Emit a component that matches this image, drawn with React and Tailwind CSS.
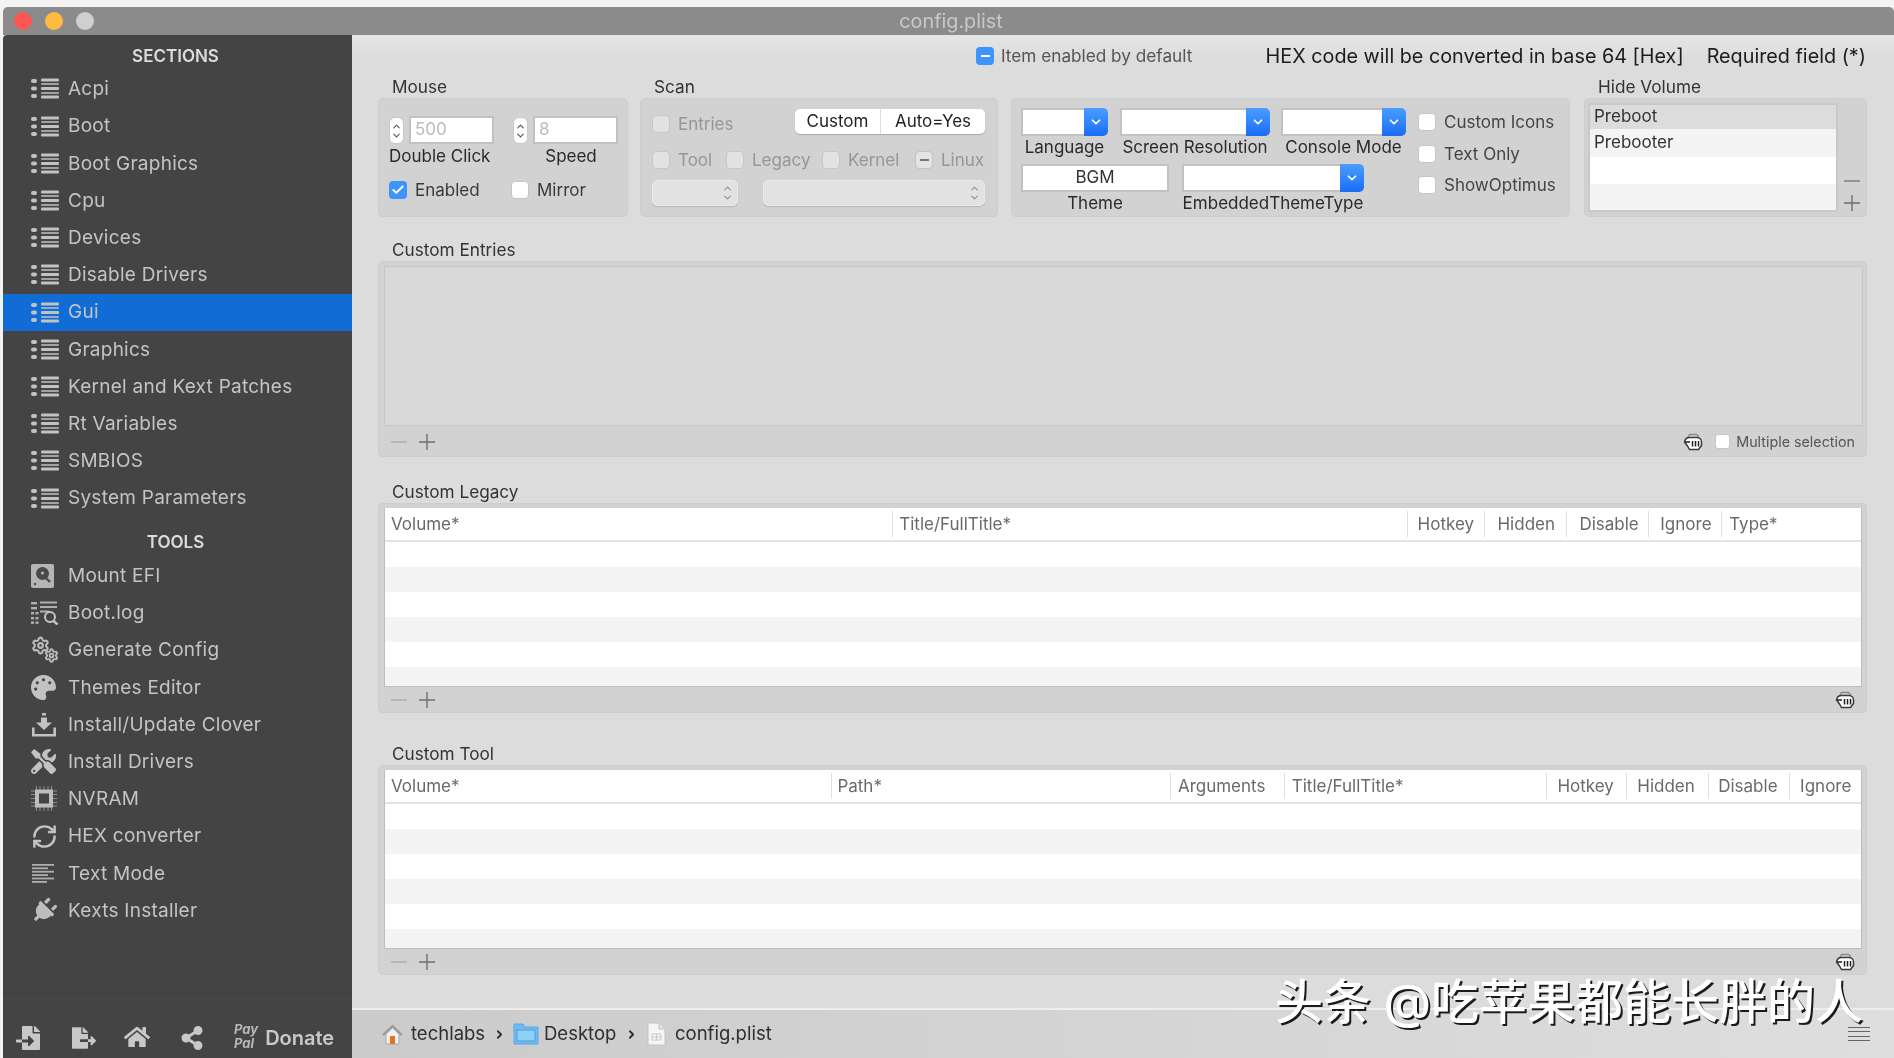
import { Check, ChevronDown, ChevronRight, ChevronUp, RefreshCw, Settings } from "lucide-react";
import { FaFileExport, FaFileImport, FaHome, FaPalette, FaPlug, FaShareAlt, FaTools } from "react-icons/fa";

const SECTIONS = ["Acpi", "Boot", "Boot Graphics", "Cpu", "Devices", "Disable Drivers", "Gui", "Graphics", "Kernel and Kext Patches", "Rt Variables", "SMBIOS", "System Parameters"];

const LEGACY_COLS = [
  { label: "Volume*", w: "w-[508px]", pad: "pl-[6px]" },
  { label: "Title/FullTitle*", w: "w-[515px]", pad: "pl-[6px]" },
  { label: "Hotkey", w: "w-[78px]", pad: "pl-[10px]" },
  { label: "Hidden", w: "w-[82px]", pad: "pl-[12px]" },
  { label: "Disable", w: "w-[82px]", pad: "pl-[12px]" },
  { label: "Ignore", w: "w-[73px]", pad: "pl-[11px]" },
  { label: "Type*", w: "w-[140px]", pad: "pl-[7px]" },
];

const TOOL_COLS = [
  { label: "Volume*", w: "w-[447px]", pad: "pl-[6px]" },
  { label: "Path*", w: "w-[339px]", pad: "pl-[5px]" },
  { label: "Arguments", w: "w-[114px]", pad: "pl-[7px]" },
  { label: "Title/FullTitle*", w: "w-[263px]", pad: "pl-[7px]" },
  { label: "Hotkey", w: "w-[80px]", pad: "pl-[10px]" },
  { label: "Hidden", w: "w-[82px]", pad: "pl-[10px]" },
  { label: "Disable", w: "w-[81px]", pad: "pl-[9px]" },
  { label: "Ignore", w: "w-[72px]", pad: "pl-[10px]" },
];

function ListIcon() {
  return (
    <svg width="28" height="21" viewBox="0 0 28 21" fill="#c2c2c2">
      <rect x="0" y="1" width="6" height="4" rx="2" />
      <rect x="0" y="8.500" width="6" height="4" rx="2" />
      <rect x="0" y="16" width="6" height="4" rx="2" />
      <rect x="10" y="0.500" width="18" height="3" rx="1" />
      <rect x="10" y="5" width="18" height="2" rx="1" opacity="0.75" />
      <rect x="10" y="9" width="18" height="3" rx="1" />
      <rect x="10" y="14" width="18" height="2" rx="1" opacity="0.75" />
      <rect x="10" y="17.500" width="18" height="3" rx="1" />
    </svg>
  );
}

function DiskIcon() {
  return (
    <svg width="23" height="24" viewBox="0 0 23 24">
      <rect width="23" height="24" rx="2" fill="#b5b5b5" />
      <circle cx="11.500" cy="9.500" r="6.500" fill="#4a4a4a" />
      <circle cx="11.500" cy="9" r="1.600" fill="#b5b5b5" />
      <path d="M12 11l7 7" stroke="#4a4a4a" strokeWidth="2.400" />
      <circle cx="4" cy="20" r="1.200" fill="#4a4a4a" />
    </svg>
  );
}

function LogIcon() {
  return (
    <svg width="28" height="24" viewBox="0 0 28 24" fill="none">
      <g fill="#b0b0b0">
        <rect x="0" y="1" width="6" height="2.400" /><rect x="9" y="0.500" width="17" height="2" />
        <rect x="0" y="6" width="6" height="2.400" /><rect x="9" y="5" width="17" height="2" />
        <rect x="0" y="11" width="3" height="2.400" /><rect x="4.500" y="11" width="3" height="2.400" /><rect x="9" y="9.500" width="9" height="2" />
        <rect x="0" y="16" width="3" height="2.400" /><rect x="4.500" y="16" width="3" height="2.400" />
        <rect x="0" y="20.500" width="3" height="2.400" /><rect x="4.500" y="20.500" width="3" height="2.400" />
      </g>
      <circle cx="19" cy="16" r="5" stroke="#c4c4c4" strokeWidth="2" />
      <path d="M22.500 20l4 3.500" stroke="#c4c4c4" strokeWidth="2.400" />
    </svg>
  );
}

function GearsIcon() {
  return (
    <span className="flex items-start h-[27px] -mt-[2px]">
      <Settings size={19} color="#bcbcbc" strokeWidth={2.6} />
      <Settings size={15} color="#bcbcbc" strokeWidth={3} className="-ml-[6px] mt-[12px]" />
    </span>
  );
}

function DownloadIcon() {
  return (
    <svg width="26" height="24" viewBox="0 0 26 24" fill="#c2c2c2">
      <rect x="11" y="0" width="4" height="2.500" />
      <path d="M10 4.500h6v5h5l-8 7.500-8-7.500h5z" />
      <path d="M1 14.500v9h24v-9h-2.600v6.400H3.600v-6.400z" />
    </svg>
  );
}

function ChipIcon() {
  return (
    <svg width="26" height="25" viewBox="0 0 26 25" fill="none">
      <path d="M5.500 0v25M9 0v25M13 0v25M17 0v25M20.500 0v25M0 5h26M0 8.500h26M0 12.500h26M0 16.500h26M0 20h26" stroke="#8f8f8f" strokeWidth="1" />
      <rect x="4" y="3.500" width="18" height="18" fill="#bdbdbd" />
      <rect x="8" y="7.500" width="10" height="10" fill="#444444" />
    </svg>
  );
}

function TextIcon() {
  return (
    <svg width="24" height="19" viewBox="0 0 24 19" fill="#aeaeae">
      <rect x="1" y="0" width="22" height="1.800" />
      <rect x="1" y="3.400" width="16" height="1.800" />
      <rect x="1" y="6.800" width="22" height="1.800" />
      <rect x="1" y="10.200" width="16" height="1.800" />
      <rect x="1" y="13.600" width="22" height="1.800" />
      <rect x="1" y="17" width="15" height="1.800" />
    </svg>
  );
}

const TOOLS = [
  { label: "Mount EFI", icon: <DiskIcon /> },
  { label: "Boot.log", icon: <LogIcon /> },
  { label: "Generate Config", icon: <GearsIcon /> },
  { label: "Themes Editor", icon: <FaPalette size={25} color="#c2c2c2" /> },
  { label: "Install/Update Clover", icon: <DownloadIcon /> },
  { label: "Install Drivers", icon: <FaTools size={25} color="#c2c2c2" /> },
  { label: "NVRAM", icon: <ChipIcon /> },
  { label: "HEX converter", icon: <RefreshCw size={27} color="#c2c2c2" strokeWidth={2.2} /> },
  { label: "Text Mode", icon: <TextIcon /> },
  { label: "Kexts Installer", icon: <FaPlug size={26} color="#bdbdbd" className="rotate-45" /> },
];

function SideRow({ icon, label, active }) {
  return (
    <div className={`h-[37.2px] flex items-center pl-[28px] text-[19px] tracking-[0.25px] text-[#c4c4c4] ${active ? "bg-[#116cd6]" : ""}`}>
      <span className="w-[37px] flex justify-start">{icon}</span>
      <span className="pt-[1px]">{label}</span>
    </div>
  );
}

function Sidebar() {
  return (
    <aside className="w-[349px] shrink-0 flex flex-col bg-[#444444] rounded-tl-[4px]">
      <div className="h-[35.4px] pt-[8px] pr-[4px] flex items-center justify-center text-[17px] font-semibold text-[#dcdcdc]">SECTIONS</div>
      {SECTIONS.map((s) => (
        <SideRow key={s} icon={<ListIcon />} label={s} active={s === "Gui"} />
      ))}
      <div className="h-[40.6px] pt-[12px] pr-[4px] flex items-center justify-center text-[17px] font-semibold text-[#dcdcdc]">TOOLS</div>
      {TOOLS.map((t) => (
        <SideRow key={t.label} icon={t.icon} label={t.label} />
      ))}
      <div className="mt-auto h-[65px] border-t border-[#3d3d3d] flex items-end pb-[8px] pl-[13px] text-[#c8c8c8]">
        <FaFileImport size={24} />
        <FaFileExport size={24} className="ml-[32px]" />
        <FaHome size={26} className="ml-[28px]" />
        <FaShareAlt size={24} className="ml-[30px]" />
        <div className="ml-[30px] flex flex-col text-[13px] leading-[14px] font-bold italic text-[#b8b8b8]">
          <span>Pay</span>
          <span>Pal</span>
        </div>
        <span className="ml-[7px] text-[20px] leading-[24px] font-semibold">Donate</span>
      </div>
    </aside>
  );
}

function Checkbox({ checked, dash, disabled, small }) {
  const size = small ? "w-[15px] h-[15px] rounded-[3px]" : "w-[18px] h-[18px] rounded-[4px]";
  if (checked || dash) {
    const color = disabled ? "bg-[#e4e4e4] border border-[#c4c4c4]" : "bg-[#3d94fb]";
    return (
      <span className={`${size} ${color} shrink-0 flex items-center justify-center`}>
        {checked && <Check size={14} color="#fff" strokeWidth={3.4} />}
        {dash && <span className={`w-[9px] h-[2.5px] ${disabled ? "bg-[#777777]" : "bg-white"}`} />}
      </span>
    );
  }
  const color = disabled ? "bg-[#e2e2e2] border-[#c6c6c6]" : "bg-white border-[#c6c6c6]";
  return <span className={`${size} ${color} border shrink-0 block`} />;
}

function Stepper() {
  return (
    <span className="w-[15px] h-[27px] mt-[1px] rounded-[6px] bg-white border border-[#c8c8c8] flex flex-col items-center justify-center shrink-0 text-[#555555]">
      <ChevronUp size={11} strokeWidth={2.4} className="-mb-[1px]" />
      <ChevronDown size={11} strokeWidth={2.4} className="-mt-[1px]" />
    </span>
  );
}

function NumberInput({ value }) {
  return (
    <div className="flex items-start gap-[5px]">
      <Stepper />
      <span className="w-[85px] h-[28px] bg-white border-2 border-[#c2c2c2] flex items-center pl-[4px] text-[17px] text-[#bcbcbc]">{value}</span>
    </div>
  );
}

function Dropdown({ w }) {
  return (
    <div className={`${w} h-[28px] flex bg-white border-2 border-r-0 border-[#c2c2c2] rounded-r-[5px]`}>
      <span className="flex-1" />
      <span className="w-[24px] -my-[2px] rounded-r-[5px] bg-gradient-to-b from-[#4a9dfc] to-[#1a6cf5] flex items-center justify-center">
        <ChevronDown size={14} color="#fff" strokeWidth={3} />
      </span>
    </div>
  );
}

function SelectBox({ w }) {
  return (
    <div className={`${w} h-[26px] rounded-[5px] bg-[#e2e2e2] border border-[#ebebeb] shadow-[0_1px_1px_#b5b5b5] flex items-center justify-end pr-[4px] text-[#8c8c8c]`}>
      <span className="flex flex-col">
        <ChevronUp size={11} strokeWidth={2.2} className="-mb-[1px]" />
        <ChevronDown size={11} strokeWidth={2.2} className="-mt-[1px]" />
      </span>
    </div>
  );
}

function Minus({ light }) {
  return (
    <svg width="16" height="16" viewBox="0 0 16 16">
      <path d="M0 8h16" stroke={light ? "#adadad" : "#7a7a7a"} strokeWidth="1.4" />
    </svg>
  );
}

function Plus() {
  return (
    <svg width="16" height="16" viewBox="0 0 16 16">
      <path d="M0 8h16M8 0v16" stroke="#6f6f6f" strokeWidth="1.4" />
    </svg>
  );
}

function Hand() {
  return (
    <svg width="20" height="18" viewBox="0 0 20 18" className="block">
      <path d="M5 4l1.500-2.500h7L16 4" fill="none" stroke="#8a8a8a" strokeWidth="1.400" />
      <path d="M1.500 9C2 6 4 4.500 6.500 4.500h7.500c2.500 0 4.500 2 4.500 4.500v3.500l-3 4H6.500l-2-3.500z" fill="#fff" stroke="#3a3a3a" strokeWidth="1.500" />
      <path d="M2 9h5M9.500 8v5.500M12.500 8v5.500M15.500 8v5.500" stroke="#1f1f1f" strokeWidth="1.500" />
    </svg>
  );
}

function Label({ children, h, pl = "pl-[14px]" }) {
  return <div className={`${h} ${pl} flex items-center text-[17.2px] text-[#333333]`}>{children}</div>;
}

function Box({ className, children }) {
  return <div className={`bg-[#d2d2d2] border border-[#cdcdcd] rounded-[5px] ${className}`}>{children}</div>;
}

function MouseBox() {
  return (
    <div className="w-[250px]">
      <Label h="h-[21px] pb-[2px]">Mouse</Label>
      <Box className="h-[119px] pt-[17px] pl-[10px] flex text-[17px] text-[#2a2a2a]">
        <div className="w-[122px]">
          <NumberInput value="500" />
          <div className="h-[25px] flex items-center">Double Click</div>
          <div className="mt-[12px] h-[18px] leading-[18px] flex items-center gap-[8px] text-[#3a3a3a]">
            <Checkbox checked />
            Enabled
          </div>
        </div>
        <div className="w-[116px]">
          <div className="pl-[2px]"><NumberInput value="8" /></div>
          <div className="h-[25px] flex items-center justify-center pl-[4px]">Speed</div>
          <div className="mt-[12px] h-[18px] leading-[18px] flex items-center gap-[8px] text-[#3a3a3a]">
            <Checkbox />
            Mirror
          </div>
        </div>
      </Box>
    </div>
  );
}

function ScanItem({ label, w, dash }) {
  return (
    <div className={`${w} h-[18px] leading-[18px] flex items-center gap-[8px] text-[17px] text-[#969696]`}>
      <Checkbox disabled dash={dash} />
      {label}
    </div>
  );
}

function ScanBox() {
  return (
    <div className="w-[358px] ml-[12px]">
      <Label h="h-[21px] pb-[2px]">Scan</Label>
      <Box className="h-[119px] pt-[10px] pl-[11px] pr-[12px]">
        <div className="flex justify-between items-start h-[25px]">
          <div className="mt-[6px]"><ScanItem label="Entries" w="w-[90px]" /></div>
          <div className="w-[190px] h-[25px] bg-white rounded-[5px] shadow-[0_1px_1px_#a8a8a8] flex items-center text-[17px] text-[#222222]">
            <span className="w-[86px] h-full flex items-center justify-center border-r border-[#dddddd]">Custom</span>
            <span className="flex-1 text-center">Auto=Yes</span>
          </div>
        </div>
        <div className="mt-[17px] flex">
          <ScanItem label="Tool" w="w-[74px]" />
          <ScanItem label="Legacy" w="w-[96px]" />
          <ScanItem label="Kernel" w="w-[93px]" />
          <ScanItem label="Linux" w="w-[70px]" dash />
        </div>
        <div className="mt-[11px] flex gap-[25px]">
          <SelectBox w="w-[87px]" />
          <SelectBox w="w-[223px]" />
        </div>
      </Box>
    </div>
  );
}

function Field({ w, gap, label, children }) {
  return (
    <div className={`${w} flex flex-col`}>
      {children}
      <div className={`${gap} flex items-center justify-center whitespace-nowrap text-[17px] text-[#2a2a2a]`}>{label}</div>
    </div>
  );
}

function CheckLine({ label }) {
  return (
    <div className="h-[18px] leading-[18px] flex items-center gap-[8px]">
      <Checkbox />
      {label}
    </div>
  );
}

function GuiBox() {
  return (
    <div className="w-[559px] ml-[13px]">
      <div className="h-[21px]" />
      <Box className="h-[119px] pt-[9px] pl-[9px] flex">
        <div className="w-[397px]">
          <div className="flex">
            <Field w="w-[87px]" gap="h-[24px]" label="Language"><Dropdown w="w-[87px]" /></Field>
            <div className="w-[12px]" />
            <Field w="w-[150px]" gap="h-[24px]" label="Screen Resolution"><Dropdown w="w-[150px]" /></Field>
            <div className="w-[11px]" />
            <Field w="w-[125px]" gap="h-[24px]" label="Console Mode"><Dropdown w="w-[125px]" /></Field>
          </div>
          <div className="mt-[4px] flex gap-[13px]">
            <Field w="w-[148px]" gap="h-[24px]" label="Theme">
              <span className="h-[28px] bg-white border-2 border-[#c2c2c2] flex items-center justify-center text-[17px] text-[#333333]">BGM</span>
            </Field>
            <Field w="w-[182px]" gap="h-[24px]" label="EmbeddedThemeType"><Dropdown w="w-[182px]" /></Field>
          </div>
        </div>
        <div className="pt-[5px] flex flex-col gap-[13.5px] text-[17px] text-[#444444]">
          <CheckLine label="Custom Icons" />
          <CheckLine label="Text Only" />
          <CheckLine label="ShowOptimus" />
        </div>
      </Box>
    </div>
  );
}

function HideVolumeBox() {
  return (
    <div className="w-[283px] ml-[14px]">
      <Label h="h-[21px] pb-[2px]">Hide Volume</Label>
      <Box className="h-[119px] pt-[4px] pl-[3px] flex">
        <div className="w-[251px] h-[109px] border-2 border-[#c8c8c8] flex flex-col text-[17px] text-[#333333]">
          <div className="h-[24px] bg-[#dcdcdc] pl-[4px] flex items-center">Preboot</div>
          <div className="h-[28px] bg-[#f4f4f4] pl-[4px] flex items-center">Prebooter</div>
          <div className="h-[27px] bg-white" />
          <div className="flex-1 bg-[#f4f4f4]" />
        </div>
        <div className="w-[28px] h-[109px] pb-[1px] flex flex-col items-center justify-end gap-[6px]">
          <Minus />
          <Plus />
        </div>
      </Box>
    </div>
  );
}

function DataTable({ cols }) {
  const rows = [0, 1, 2, 3, 4, 5];
  return (
    <div className="h-[179px] border-x border-b border-[#bdbdbd] overflow-hidden bg-white">
      <div className="h-[34px] flex items-center border-b-2 border-[#e3e3e3] text-[17px] text-[#6a6a6a]">
        {cols.map((c, i) => (
          <div key={c.label} className={`${c.w} ${c.pad} h-[26px] pt-[2px] flex items-center whitespace-nowrap ${i > 0 ? "border-l border-[#e0e0e0]" : ""}`}>
            {c.label}
          </div>
        ))}
      </div>
      {rows.map((r) => (
        <div key={r} className={`h-[25px] ${r % 2 ? "bg-[#f4f4f4]" : "bg-white"}`} />
      ))}
    </div>
  );
}

function TableGroup({ title, cols, labelH }) {
  return (
    <div>
      <Label h={labelH}>{title}</Label>
      <Box className="h-[210px] pt-[4px] pl-[5px] pr-[4px]">
        <DataTable cols={cols} />
        <div className="h-[26px] flex items-center pl-[7px] pr-[7px] gap-[12px]">
          <Minus light />
          <Plus />
          <span className="ml-auto"><Hand /></span>
        </div>
      </Box>
    </div>
  );
}

function BottomBar() {
  return (
    <div className="h-[50px] shrink-0 border-t-2 border-[#eeeeee] bg-gradient-to-r from-[#cbcbcb] to-[#dedede] flex items-center pl-[30px] pr-[24px] text-[18.5px] text-[#2f2f2f]">
      <svg width="21" height="21" viewBox="0 0 21 21">
        <path d="M4 10v10h13V10l-6.500-6z" fill="#f1f1f1" stroke="#a8a8a8" />
        <path d="M1 11l9.500-9 9.500 9" fill="none" stroke="#9a9a9a" strokeWidth="2" />
        <rect x="8" y="12" width="5" height="8" fill="#e8741a" />
      </svg>
      <span className="ml-[8px] w-[74px]">techlabs</span>
      <ChevronRight size={13} strokeWidth={3.4} className="ml-[8px]" />
      <svg className="ml-[7px]" width="26" height="24" viewBox="0 0 26 24">
        <path d="M1 22V2h9l2 3h13v17z" fill="#6cbcf1" stroke="#54a8e2" />
        <rect x="4" y="8" width="18" height="11" fill="#8fd0f7" stroke="#4f9fd8" />
      </svg>
      <span className="ml-[5px] w-[74px]">Desktop</span>
      <ChevronRight size={13} strokeWidth={3.4} className="ml-[7px]" />
      <svg className="ml-[9px]" width="19" height="24" viewBox="0 0 19 24">
        <path d="M1 1h11l6 6v16H1z" fill="#f5f5f5" stroke="#c2c2c2" />
        <path d="M12 1v6h6" fill="#e2e2e2" stroke="#c2c2c2" />
        <path d="M5 12h9v6H5zM9.500 12v6M5 15h9" fill="none" stroke="#c8c8c8" />
      </svg>
      <span className="ml-[9px]">config.plist</span>
      <div className="ml-auto w-[22px] h-[15px] flex flex-col justify-between">
        <span className="h-[1px] bg-[#666666]" />
        <span className="h-[1px] bg-[#666666]" />
        <span className="h-[1px] bg-[#666666]" />
        <span className="h-[1px] bg-[#666666]" />
      </div>
    </div>
  );
}

export default function App() {
  return (
    <div className="relative w-[1894px] h-[1058px] overflow-hidden bg-[#f3f3f1] pt-[7px] pl-[3px] flex flex-col blur-[0.4px] font-['Inter','Noto_Sans_CJK_SC',sans-serif]">
      <div className="h-[28px] shrink-0 rounded-t-[5px] bg-[#8b8b8b] flex items-center relative">
        <span className="ml-[11px] w-[18px] h-[18px] rounded-full bg-[#fc5753]" />
        <span className="ml-[13px] w-[18px] h-[18px] rounded-full bg-[#fdbb40]" />
        <span className="ml-[13px] w-[18px] h-[18px] rounded-full bg-[#cfcfcf]" />
        <span className="absolute left-0 right-0 text-center pl-[5px] pt-[1px] text-[19.8px] text-[#c8c8c8]">config.plist</span>
      </div>
      <div className="flex-1 flex min-h-0">
        <Sidebar />
        <main className="flex-1 flex flex-col min-w-0 bg-[#dcdcdc]">
          <div className="flex-1 pl-[26px] pr-[27px] bg-gradient-to-b from-[#e6e6e6] to-[#dcdcdc] bg-[length:100%_24px] bg-no-repeat">
            <div className="h-[42px] flex items-center pl-[598px]">
              <Checkbox dash />
              <span className="ml-[7px] text-[17.2px] text-[#555555]">Item enabled by default</span>
              <span className="ml-auto pt-[2px] text-[19.8px] text-[#1c1c1c]">HEX code will be converted in base 64 [Hex]</span>
              <span className="ml-[23px] mr-[1px] pt-[2px] text-[19.8px] text-[#1c1c1c]">Required field (*)</span>
            </div>
            <div className="flex">
              <MouseBox />
              <ScanBox />
              <GuiBox />
              <HideVolumeBox />
            </div>
            <Label h="h-[22px] mt-[22px]">Custom Entries</Label>
            <Box className="h-[196px] pt-[4px] pl-[5px] pr-[3px]">
              <div className="h-[160px] bg-[#d9d9d9] border border-[#c6c6c6]" />
              <div className="h-[31px] flex items-center pl-[7px] pr-[8px] gap-[12px]">
                <Minus light />
                <Plus />
                <span className="ml-auto"><Hand /></span>
                <Checkbox small />
                <span className="-ml-[6px] text-[14.3px] text-[#555555]">Multiple selection</span>
              </div>
            </Box>
            <div className="mt-[24px]">
              <TableGroup title="Custom Legacy" cols={LEGACY_COLS} labelH="h-[22px]" />
            </div>
            <div className="mt-[30px]">
              <TableGroup title="Custom Tool" cols={TOOL_COLS} labelH="h-[22px]" />
            </div>
          </div>
          <BottomBar />
        </main>
      </div>
      <span className="absolute left-[1275px] top-[973px] text-[48px] leading-[58px] whitespace-nowrap text-white font-medium [text-shadow:2px_2px_0_#1a1a1a]">头条 @吃苹果都能长胖的人</span>
    </div>
  );
}
